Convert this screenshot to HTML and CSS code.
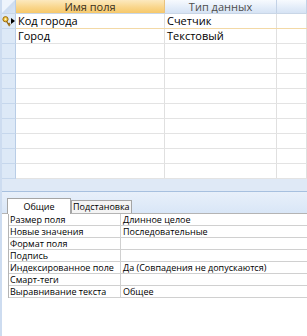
FILE: index.html
```html
<!doctype html>
<html lang="ru">
    <head>
        <meta charset="UTF-8" />
        <title>Конструктор таблицы</title>
        <link rel="stylesheet" href="styles.css">
    </head>
    <body>
        <div class="design">
            <div class="grid">
                <div class="row head">
                    <div class="sel corner"></div>
                    <div class="cell name active">Имя поля</div>
                    <div class="cell type">Тип данных</div>
                    <div class="cell desc"></div>
                </div>
                <div class="row current">
                    <div class="sel">
                        <svg class="key" width="9" height="11" viewBox="0 0 9 11">
                            <circle cx="3.5" cy="3.2" r="2.6" fill="#f2c744" stroke="#9a6a10" stroke-width="1"/>
                            <circle cx="3.5" cy="3.2" r="0.9" fill="#fff6d0"/>
                            <path d="M4.6 5.4 L7.6 10.2 M6.2 8 L7.8 7.2 M6.9 9.2 L8.4 8.4" stroke="#9a6a10" stroke-width="1.3" fill="none"/>
                        </svg>
                        <span class="arrow"></span>
                    </div>
                    <div class="cell name">Код города</div>
                    <div class="cell type">Счетчик</div>
                    <div class="cell desc"></div>
                </div>
                <div class="row">
                    <div class="sel"></div>
                    <div class="cell name">Город</div>
                    <div class="cell type">Текстовый</div>
                    <div class="cell desc"></div>
                </div>
                <div class="row"><div class="sel"></div><div class="cell name"></div><div class="cell type"></div><div class="cell desc"></div></div>
                <div class="row"><div class="sel"></div><div class="cell name"></div><div class="cell type"></div><div class="cell desc"></div></div>
                <div class="row"><div class="sel"></div><div class="cell name"></div><div class="cell type"></div><div class="cell desc"></div></div>
                <div class="row"><div class="sel"></div><div class="cell name"></div><div class="cell type"></div><div class="cell desc"></div></div>
                <div class="row"><div class="sel"></div><div class="cell name"></div><div class="cell type"></div><div class="cell desc"></div></div>
                <div class="row"><div class="sel"></div><div class="cell name"></div><div class="cell type"></div><div class="cell desc"></div></div>
                <div class="row"><div class="sel"></div><div class="cell name"></div><div class="cell type"></div><div class="cell desc"></div></div>
                <div class="row"><div class="sel"></div><div class="cell name"></div><div class="cell type"></div><div class="cell desc"></div></div>
                <div class="row"><div class="sel"></div><div class="cell name"></div><div class="cell type"></div><div class="cell desc"></div></div>
            </div>
            <div class="splitter"></div>
            <div class="props">
                <div class="tabs">
                    <div class="tab on">Общие</div>
                    <div class="tab">Подстановка</div>
                </div>
                <div class="sheet">
                    <div class="prop"><div class="label">Размер поля</div><div class="value">Длинное целое</div></div>
                    <div class="prop"><div class="label">Новые значения</div><div class="value">Последовательные</div></div>
                    <div class="prop"><div class="label">Формат поля</div><div class="value"></div></div>
                    <div class="prop"><div class="label">Подпись</div><div class="value"></div></div>
                    <div class="prop"><div class="label">Индексированное поле</div><div class="value">Да (Совпадения не допускаются)</div></div>
                    <div class="prop"><div class="label">Смарт-теги</div><div class="value"></div></div>
                    <div class="prop"><div class="label">Выравнивание текста</div><div class="value">Общее</div></div>
                </div>
            </div>
        </div>
    </body>
</html>
```

FILE: styles.css
```css
body {
    margin: 0;
    background: #fff;
    font-family: "Open Sans", "Liberation Sans", sans-serif;
    color: #000;
}
.design {
    width: 307px;
    height: 336px;
    overflow: hidden;
    border-left: 2px solid #cddcf0;
    box-sizing: border-box;
}
.row {
    display: grid;
    grid-template-columns: 14px 149px 112px 1fr;
    height: 15px;
    box-sizing: border-box;
    border-bottom: 1px solid #e3e3e3;
}
.cell {
    border-right: 1px solid #e0e0e0;
    font-size: 11px;
    line-height: 14px;
    padding-left: 2px;
    white-space: nowrap;
    overflow: hidden;
}
.sel {
    background: #dde9f7;
    border-right: 1px solid #b9cde6;
    border-bottom: 1px solid #c6d7ec;
    margin-bottom: -1px;
    position: relative;
}
.head {
    height: 14px;
    border-bottom: 1px solid #c9d6e6;
}
.head .cell {
    background: linear-gradient(#f7fafe, #e4edf9 55%, #d6e3f4);
    border-right: 1px solid #c3d2e6;
    text-align: center;
    color: #4d4d4d;
    line-height: 13px;
    padding-left: 0;
}
.head .cell.active {
    background: linear-gradient(#fce9bf, #f9d68c 55%, #f6c86a);
    border-right: 1px solid #e9c27e;
    color: #3a3020;
}
.sel.corner {
    background: linear-gradient(135deg, #eef4fc 0%, #eef4fc 48%, #cddcf0 52%, #d9e5f5 100%);
    border-bottom: none;
    margin-bottom: 0;
}
.current {
    border-bottom: 1px solid #f3d9a6;
}
.key {
    position: absolute;
    left: 0;
    top: 2px;
}
.arrow {
    position: absolute;
    left: 9px;
    top: 4px;
    border-left: 4px solid #000;
    border-top: 3px solid transparent;
    border-bottom: 3px solid transparent;
}
.splitter {
    height: 12px;
    background: #dfe9f6;
    border-bottom: 1px solid #a7c0df;
}
.tabs {
    display: flex;
    align-items: flex-end;
    height: 22px;
    padding-left: 5px;
    background: linear-gradient(#e8f0fa, #d9e6f7);
    border-bottom: 1px solid #b4b4b4;
    box-sizing: border-box;
}
.tab {
    font-size: 9px;
    line-height: 12px;
    height: 12px;
    padding: 0 1px;
    border: 1px solid #a5a5a5;
    border-bottom: none;
    background: #f4f4f4;
    white-space: nowrap;
}
.tab.on {
    width: 60px;
    height: 15px;
    line-height: 15px;
    text-align: center;
    background: #fff;
    margin-bottom: -1px;
    position: relative;
}
.sheet {
    margin-left: 6px;
    border-left: 1px solid #b4b4b4;
}
.prop {
    display: grid;
    grid-template-columns: 112px 1fr;
    height: 12px;
    border-bottom: 1px solid #d0d0d0;
    box-sizing: border-box;
    font-size: 9px;
    line-height: 11px;
}
.label {
    padding-left: 1px;
    border-right: 1px solid #d0d0d0;
    white-space: nowrap;
    overflow: hidden;
}
.value {
    padding-left: 2px;
    white-space: nowrap;
    overflow: hidden;
}
```
